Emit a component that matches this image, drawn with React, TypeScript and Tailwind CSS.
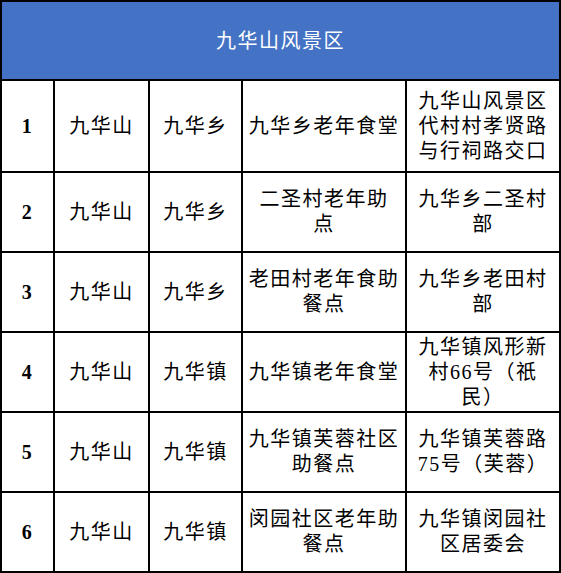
const rows: { no: string; area: string; town: string; name: string[]; addr: string[] }[] = [
  { no: '1', area: '九华山', town: '九华乡', name: ['九华乡老年食堂'], addr: ['九华山风景区', '代村村孝贤路', '与行祠路交口'] },
  { no: '2', area: '九华山', town: '九华乡', name: ['二圣村老年助', '点'], addr: ['九华乡二圣村', '部'] },
  { no: '3', area: '九华山', town: '九华乡', name: ['老田村老年食助', '餐点'], addr: ['九华乡老田村', '部'] },
  { no: '4', area: '九华山', town: '九华镇', name: ['九华镇老年食堂'], addr: ['九华镇风形新', '村66号（祇', '民）'] },
  { no: '5', area: '九华山', town: '九华镇', name: ['九华镇芙蓉社区', '助餐点'], addr: ['九华镇芙蓉路', '75号（芙蓉）'] },
  { no: '6', area: '九华山', town: '九华镇', name: ['闵园社区老年助', '餐点'], addr: ['九华镇闵园社', '区居委会'] },
];

const cell = 'flex flex-col items-center justify-center text-center border-black';

export default function App() {
  return (
    <div className="w-[561px] h-[573px] bg-white font-['Liberation_Serif','Noto_Sans_CJK_SC',serif] text-black">
      <div className="w-[561px] border-2 border-black">
        <div className="flex h-[79px] items-center justify-center border-b-2 border-black bg-[#4472c4] text-[20px] tracking-[1.5px] text-white">
          九华山风景区
        </div>
        {rows.map((r, i) => (
          <div
            key={r.no}
            className={`grid grid-cols-[53px_95px_93px_164px_152px] text-[20px] leading-[25px] tracking-[1.5px] ${
              i === 0 ? 'h-[92px]' : i === rows.length - 1 ? 'h-[78px]' : 'h-[80px]'
            } ${i === rows.length - 1 ? '' : 'border-b-2 border-black'}`}
          >
            <div className={`${cell} border-r-2 font-bold`}>{r.no}</div>
            <div className={`${cell} border-r-2`}>{r.area}</div>
            <div className={`${cell} border-r-2`}>{r.town}</div>
            <div className={`${cell} border-r-2`}>
              {r.name.map(l => <span key={l}>{l}</span>)}
            </div>
            <div className={cell}>
              {r.addr.map(l => <span key={l}>{l}</span>)}
            </div>
          </div>
        ))}
      </div>
    </div>
  );
}
